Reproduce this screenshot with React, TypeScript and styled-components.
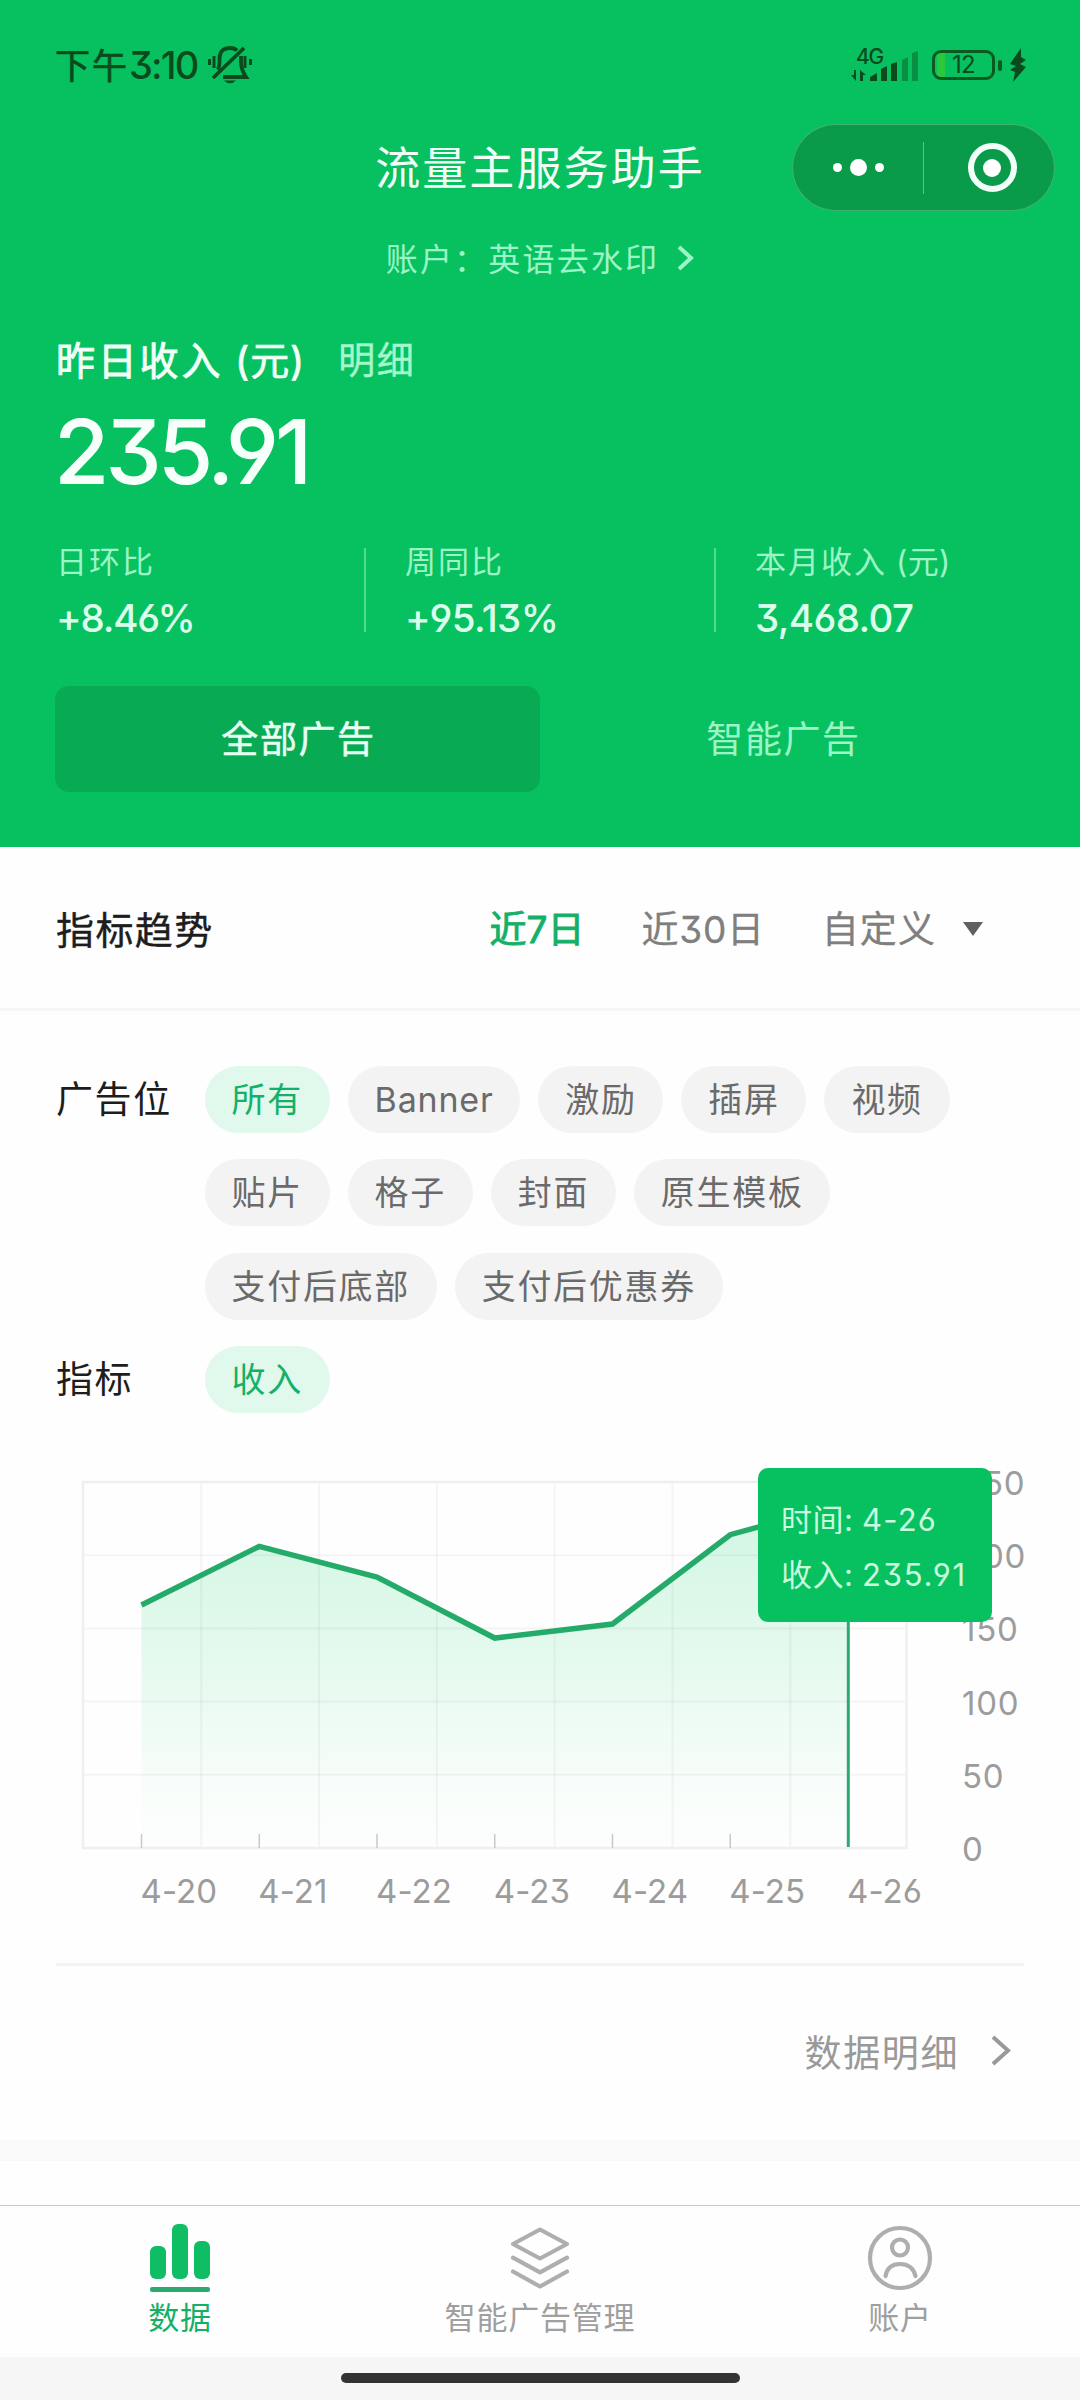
import React from 'react';
import styled, { createGlobalStyle } from 'styled-components';

const GREEN = '#07c160';
const ACCENT = '#14b068';
const LINE = '#24ab6a';

const GlobalStyle = createGlobalStyle`
  * { box-sizing: border-box; }
  html, body { margin: 0; padding: 0; background: #fefefe; }
  body {
    font-family: Inter, 'Noto Sans CJK SC', 'Noto Sans', sans-serif;
    font-feature-settings: 'cv03', 'cv04', 'cv09', 'calt' 0;
    white-space: nowrap;
  }
`;

const Screen = styled.div`
  width: 1080px;
  height: 2400px;
  display: flex;
  flex-direction: column;
  background: #fefefe;
  overflow: hidden;
`;

const Txt = styled.span<{ $size: number; $ls?: number; $color?: string; $weight?: number; $stroke?: number; $lift?: number }>`
  font-size: ${p => p.$size}px;
  letter-spacing: ${p => p.$ls ?? 0}px;
  color: ${p => p.$color ?? 'inherit'};
  font-weight: ${p => p.$weight ?? 400};
  -webkit-text-stroke: ${p => p.$stroke ?? 0}px currentColor;
  padding-bottom: ${p => p.$lift ?? 0}px;
`;

/* ---------- header ---------- */

const Header = styled.header`
  height: 847px;
  flex: none;
  display: flex;
  flex-direction: column;
  background: ${GREEN};
  color: #f2fff8;
`;

const StatusBar = styled.div`
  height: 124px;
  padding: 6px 53px 0 55px;
  display: flex;
  align-items: center;
  justify-content: space-between;
  color: #0b4a1c;
`;

const StatusGroup = styled.div`
  display: flex;
  align-items: center;
`;

const BellIcon = styled.svg`
  margin-left: 9px;
`;

const Battery = styled.div`
  width: 63px;
  height: 30px;
  margin-left: 13px;
  border: 3px solid #0a5a22;
  border-radius: 9px;
  display: flex;
  align-items: center;
  justify-content: center;
  line-height: 24px;
  background: linear-gradient(90deg, transparent 2px, #2cc83c 2px, #2cc83c 10px, transparent 10px);
`;

const BatteryTip = styled.div`
  width: 4px;
  height: 11px;
  margin: 0 7px 0 3px;
  border-radius: 2px;
  background: #0a5a22;
`;

const TitleBar = styled.div`
  height: 86px;
  padding: 0 25px;
  display: grid;
  grid-template-columns: 1fr auto 1fr;
  align-items: center;
`;

const Capsule = styled.div`
  grid-column: 3;
  justify-self: end;
  width: 263px;
  height: 87px;
  border-radius: 44px;
  border: 1px solid rgba(255, 255, 255, 0.22);
  background: #0a9b4a;
  display: flex;
  align-items: center;
`;

const CapsuleHalf = styled.div<{ $pad: number }>`
  width: 130px;
  display: flex;
  align-items: center;
  justify-content: center;
  gap: 8px;
  padding-left: ${p => p.$pad}px;
`;

const CapsuleRule = styled.div`
  width: 1px;
  height: 52px;
  background: rgba(255, 255, 255, 0.35);
`;

const Dot = styled.i<{ $d: number }>`
  width: ${p => p.$d}px;
  height: ${p => p.$d}px;
  border-radius: 50%;
  background: #fff;
`;

const Ring = styled.div`
  width: 49px;
  height: 49px;
  border: 6.5px solid #f2fff8;
  border-radius: 50%;
  display: grid;
  place-items: center;
`;

const Account = styled.div`
  height: 48px;
  margin-top: 24px;
  display: flex;
  align-items: center;
  justify-content: center;
  gap: 18px;
  color: #9cf5c6;
`;

const IncomeHead = styled.div`
  height: 56px;
  margin-top: 51px;
  padding-left: 56px;
  display: flex;
  align-items: center;
  line-height: 56px;
`;

const DetailLink = styled(Txt)`
  margin-left: 33px;
`;

const Amount = styled.div`
  height: 90px;
  margin-top: 18px;
  padding-left: 54px;
  font-size: 90px;
  line-height: 90px;
  font-weight: 500;
  letter-spacing: -4.1px;
  color: #f6fffa;
`;

const Stats = styled.div`
  height: 84px;
  margin-top: 51px;
  display: flex;
`;

const Stat = styled.div<{ $w: number; $pad: number }>`
  width: ${p => p.$w}px;
  padding-left: ${p => p.$pad}px;
  border-right: 2px solid #4fdc92;
  display: flex;
  flex-direction: column;
  gap: 28px;
  line-height: 28px;
  &:last-child { border-right: none; }
`;

const StatLabel = styled.div`
  display: flex;
  height: 28px;
  font-size: 31px;
  letter-spacing: 2px;
  color: #9cf5c6;
`;

const Unit = styled.span`
  letter-spacing: 0.3px;
`;

const Tabs = styled.div`
  height: 106px;
  margin: 54px 55px 0;
  display: flex;
`;

const Tab = styled.div<{ $active?: boolean }>`
  flex: 1;
  display: flex;
  align-items: center;
  justify-content: center;
  padding: 0 0 4px 2px;
  border-radius: 14px;
  background: ${p => (p.$active ? '#08ab54' : 'transparent')};
  color: ${p => (p.$active ? '#eafff3' : '#9cf5c6')};
`;

/* ---------- trend ---------- */

const TrendBar = styled.div`
  height: 164px;
  flex: none;
  padding: 0 97px 1px 56px;
  display: flex;
  align-items: center;
  border-bottom: 3px solid #f6f6f6;
  color: #7f7f7f;
`;

const Range = styled.div<{ $ml: number }>`
  margin-left: ${p => p.$ml}px;
  display: flex;
`;

const Caret = styled.i`
  margin: 3px 0 0 auto;
  border: 10.5px solid transparent;
  border-top: 14px solid #606060;
  border-bottom: none;
`;

const Filters = styled.section`
  flex: none;
  height: 402px;
  padding: 55px 56px 0;
  display: flex;
  flex-direction: column;
  gap: 27.3px;
`;

const FilterRow = styled.div`
  display: flex;
  align-items: flex-start;
`;

const FilterLabel = styled.div`
  width: 148.5px;
  flex: none;
  display: flex;
  line-height: 67px;
  color: #1d1d1d;
`;

const Chips = styled.div`
  flex: 1;
  display: flex;
  flex-wrap: wrap;
  gap: 27.3px 18px;
`;

const Chip = styled.div<{ $active?: boolean }>`
  height: 67px;
  margin-bottom: -1px;
  padding: 0 26.7px 0 27px;
  border-radius: 34px;
  line-height: 67px;
  font-size: 34px;
  letter-spacing: 1.7px;
  color: ${p => (p.$active ? ACCENT : '#6a6a6a')};
  background: ${p => (p.$active ? '#e1f9ec' : '#f4f3f3')};
`;

const ChipLatin = styled.span`
  letter-spacing: 0.8px;
`;

/* ---------- chart ---------- */

const ChartBox = styled.div`
  position: relative;
  height: 550px;
  flex: none;
`;

const Tooltip = styled.div`
  position: absolute;
  left: 758px;
  top: 55px;
  width: 234px;
  height: 154px;
  padding: 24px 0 0 23px;
  border-radius: 10px;
  background: ${GREEN};
  color: #c9fbdf;
`;

const TipLine = styled.div`
  display: flex;
  height: 55px;
  line-height: 55px;
`;

const TipLabel = styled.span`
  width: 81px;
  font-size: 31px;
  letter-spacing: 0.5px;
`;

const AxisText = styled.text<{ $ls: number }>`
  font-size: 33px;
  fill: #9c9c9c;
  letter-spacing: ${p => p.$ls}px;
`;

const MoreRow = styled.div`
  height: 177px;
  flex: none;
  margin: 0 56px;
  padding: 0 13px 5px 0;
  border-top: 3px solid #f3f3f3;
  display: flex;
  align-items: center;
  justify-content: flex-end;
  gap: 32px;
  color: #999;
`;

const Band = styled.div`
  height: 21px;
  flex: none;
  background: #f9f9f9;
`;

/* ---------- bottom navigation ---------- */

const Nav = styled.nav`
  height: 152px;
  flex: none;
  margin-top: auto;
  padding-top: 16px;
  border-top: 1px solid #c9cccb;
  display: flex;
`;

const NavItem = styled.div<{ $active?: boolean }>`
  flex: 1;
  display: flex;
  flex-direction: column;
  align-items: center;
  line-height: 48px;
  color: ${p => (p.$active ? ACCENT : '#9f9f9f')};
`;

const HomeArea = styled.div`
  height: 43px;
  flex: none;
  padding-top: 16px;
  display: flex;
  justify-content: center;
  background: #f6f6f6;
`;

const HomeBar = styled.div`
  width: 399px;
  height: 10px;
  border-radius: 5px;
  background: #333;
`;

const points = [
  { day: '4-20', value: 166 },
  { day: '4-21', value: 206 },
  { day: '4-22', value: 185 },
  { day: '4-23', value: 143.4 },
  { day: '4-24', value: 153 },
  { day: '4-25', value: 214 },
  { day: '4-26', value: 235.91 },
];

const BOTTOM = 435;
const px = (i: number) => 141.5 + i * 117.75;
const py = (v: number) => BOTTOM - v * 1.464;

function Chart() {
  const line = points.map((p, i) => `${px(i)},${py(p.value)}`).join(' ');
  return (
    <svg width="1080" height="550" viewBox="0 0 1080 550">
      <defs>
        <linearGradient id="area" gradientUnits="userSpaceOnUse" x1="0" y1="90" x2="0" y2={BOTTOM}>
          <stop offset="0" stopColor="#14d46c" stopOpacity="0.19" />
          <stop offset="0.45" stopColor="#14d46c" stopOpacity="0.11" />
          <stop offset="0.8" stopColor="#14d46c" stopOpacity="0.03" />
          <stop offset="1" stopColor="#14d46c" stopOpacity="0.005" />
        </linearGradient>
      </defs>
      <polygon points={`${px(0)},${BOTTOM} ${line} ${px(6)},${BOTTOM}`} fill="url(#area)" />
      <g stroke="#000" strokeOpacity="0.04" strokeWidth="2">
        {[50, 100, 150, 200].map(v => (
          <line key={v} x1="83" x2="906" y1={py(v)} y2={py(v)} />
        ))}
        {[1, 2, 3, 4, 5, 6].map(i => (
          <line key={i} y1="69" y2={BOTTOM} x1={83.5 + i * 117.8} x2={83.5 + i * 117.8} />
        ))}
      </g>
      <rect x="83" y="69" width="823.5" height="366" fill="none" stroke="#efefef" strokeWidth="2.5" />
      {points.slice(0, 6).map((p, i) => (
        <line key={p.day} x1={px(i)} x2={px(i)} y1="421" y2="435" stroke="#c8c8c8" strokeWidth="1.5" />
      ))}
      <polyline points={line} fill="none" stroke={LINE} strokeWidth="5.5" />
      <line x1="848.3" x2="848.3" y1="80" y2="434" stroke="#2fa873" strokeWidth="3" />
      {points.map((p, i) => (
        <AxisText key={p.day} $ls={0.1} x={px(i) - 1} y="490">{p.day}</AxisText>
      ))}
      {[0, 50, 100, 150, 200, 250].map(v => (
        <AxisText key={v} $ls={0.8} x="962" y={py(v) + 13}>{v}</AxisText>
      ))}
    </svg>
  );
}

function Chevron({ w, h, s }: { w: number; h: number; s: number }) {
  return (
    <svg width={w} height={h} fill="none" stroke="currentColor" strokeWidth={s}>
      <path d={`M2 2L${w - 3} ${h / 2}L2 ${h - 2}`} />
    </svg>
  );
}

export default function App() {
  return (
    <Screen>
      <GlobalStyle />
      <Header>
        <StatusBar>
          <StatusGroup>
            <Txt $size={35} $ls={2} $stroke={0.7} $lift={3}>下午</Txt>
            <Txt $size={38} $ls={-1.8} $weight={500}>3:10</Txt>
            <BellIcon width="46" height="40" viewBox="0 0 46 40" fill="none" stroke="currentColor" strokeWidth="3.8">
              <path d="M37 3L6 33" />
              <path d="M10.500 24.500C13 22 12.500 18 12.500 13.500C12.500 6 17 3 23 3C26 3 28.500 4 30 5.500" />
              <path d="M34 11V17C34 23 35 26 39 32H16" />
              <path d="M17 35.500Q23 41 29 35.500Z" fill="currentColor" stroke="none" />
              <path d="M2.500 14V20M7 11V23M38 11V23M43.500 14V20" strokeWidth="3" />
            </BellIcon>
          </StatusGroup>
          <StatusGroup>
            <svg width="68" height="48" viewBox="0 -6 68 48" fill="currentColor">
              <text x="5" y="17" fontSize="21" letterSpacing="-1.2" fontWeight="500">4G</text>
              <path d="M5 23V34L0 28H3V23ZM9 34V23L15 28H12V34Z" />
              <path d="M19 30L26 26V34H19ZM30 22L36 19V34H30ZM40 17L46 15V34H40Z" />
              <path d="M51 13L57 10V34H51ZM61 6L67 4V34H61Z" opacity=".42" />
            </svg>
            <Battery><Txt $size={24} $ls={-0.8}>12</Txt></Battery>
            <BatteryTip />
            <svg width="18" height="34" viewBox="0 0 18 34" fill="currentColor">
              <path d="M12 0L1 16L7 18L1 22L6 24L4 34L17 19L11 16L17 12L12 9Z" />
            </svg>
          </StatusGroup>
        </StatusBar>

        <TitleBar>
          <span />
          <Txt $size={45} $ls={2.1} $lift={4}>流量主服务助手</Txt>
          <Capsule>
            <CapsuleHalf $pad={0}>
              <Dot $d={9} />
              <Dot $d={17} />
              <Dot $d={9} />
            </CapsuleHalf>
            <CapsuleRule />
            <CapsuleHalf $pad={6}>
              <Ring><Dot $d={18} /></Ring>
            </CapsuleHalf>
          </Capsule>
        </TitleBar>

        <Account>
          <Txt $size={32} $ls={2.2} $lift={2}>账户：英语去水印</Txt>
          <Chevron w={17} h={26} s={4} />
        </Account>

        <IncomeHead>
          <Txt $size={39} $ls={2.8} $stroke={0.9}>昨日收入</Txt>
          <Txt $size={39} $ls={0.9} $stroke={0.7}>&nbsp;(元)</Txt>
          <DetailLink $size={37} $ls={1.5} $color="#a4f8cb" $stroke={0.4}>明细</DetailLink>
        </IncomeHead>
        <Amount>235.91</Amount>

        <Stats>
          <Stat $w={366} $pad={56}>
            <StatLabel>日环比</StatLabel>
            <Txt $size={38.5} $ls={-1.2} $weight={500} $color="#dcffec">+8.46%</Txt>
          </Stat>
          <Stat $w={350} $pad={39}>
            <StatLabel>周同比</StatLabel>
            <Txt $size={38.5} $ls={-0.6} $weight={500} $color="#dcffec">+95.13%</Txt>
          </Stat>
          <Stat $w={364} $pad={39}>
            <StatLabel>本月收入<Unit>&nbsp;(元)</Unit></StatLabel>
            <Txt $size={38.5} $ls={-0.6} $weight={500} $color="#dcffec">3,468.07</Txt>
          </Stat>
        </Stats>

        <Tabs>
          <Tab $active><Txt $size={37} $ls={1.6} $stroke={0.5}>全部广告</Txt></Tab>
          <Tab><Txt $size={37} $ls={1.6}>智能广告</Txt></Tab>
        </Tabs>
      </Header>

      <TrendBar>
        <Txt $size={38} $ls={1.4} $color="#1d1d1d" $stroke={0.4}>指标趋势</Txt>
        <Range $ml={276}><Txt $size={37} $color={ACCENT} $stroke={0.9}>近7日</Txt></Range>
        <Range $ml={57}><Txt $size={37} $ls={0.7} $stroke={0.3}>近30日</Txt></Range>
        <Range $ml={57}><Txt $size={37} $ls={1.2} $stroke={0.3}>自定义</Txt></Range>
        <Caret />
      </TrendBar>

      <Filters>
        <FilterRow>
          <FilterLabel><Txt $size={37} $ls={1.6}>广告位</Txt></FilterLabel>
          <Chips>
            <Chip $active>所有</Chip>
            <Chip><ChipLatin>Banner</ChipLatin></Chip>
            <Chip>激励</Chip>
            <Chip>插屏</Chip>
            <Chip>视频</Chip>
            <Chip>贴片</Chip>
            <Chip>格子</Chip>
            <Chip>封面</Chip>
            <Chip>原生模板</Chip>
            <Chip>支付后底部</Chip>
            <Chip>支付后优惠券</Chip>
          </Chips>
        </FilterRow>
        <FilterRow>
          <FilterLabel><Txt $size={37} $ls={1.6}>指标</Txt></FilterLabel>
          <Chips>
            <Chip $active>收入</Chip>
          </Chips>
        </FilterRow>
      </Filters>

      <ChartBox>
        <Chart />
        <Tooltip>
          <TipLine><TipLabel>时间:</TipLabel><Txt $size={31} $ls={1.2}>4-26</Txt></TipLine>
          <TipLine><TipLabel>收入:</TipLabel><Txt $size={31} $ls={1.8}>235.91</Txt></TipLine>
        </Tooltip>
      </ChartBox>

      <MoreRow>
        <Txt $size={37} $ls={1.6}>数据明细</Txt>
        <Chevron w={20} h={31} s={4} />
      </MoreRow>
      <Band />

      <Nav>
        <NavItem $active>
          <svg width="72" height="72" viewBox="0 0 72 72" fill="#0fbd65">
            <rect x="6" y="24" width="16" height="33" rx="6" />
            <rect x="28" y="2" width="16" height="55" rx="6" />
            <rect x="50" y="19" width="16" height="38" rx="6" />
            <rect x="6" y="65" width="60" height="5" rx="2" fill="#2da871" />
          </svg>
          <Txt $size={31} $ls={0.8}>数据</Txt>
        </NavItem>
        <NavItem>
          <svg width="72" height="72" viewBox="0 0 72 72" fill="none" stroke="#aeaeae" strokeWidth="4.2" strokeLinecap="round" strokeLinejoin="round">
            <path d="M36 7.500L63 22L36 36.500L9 22Z" />
            <path d="M9 35.700L36 50.300L63 35.700M9 49.500L36 64.500L63 49.500" />
          </svg>
          <Txt $size={31} $ls={0.8}>智能广告管理</Txt>
        </NavItem>
        <NavItem>
          <svg width="72" height="72" viewBox="0 0 72 72" fill="none" stroke="#aeaeae" strokeWidth="4.2" strokeLinecap="round">
            <circle cx="36" cy="36" r="30" />
            <circle cx="36" cy="25.500" r="8" />
            <path d="M21.500 54C23 46 28 42 36 42S49.500 46 51.500 54" />
          </svg>
          <Txt $size={31} $ls={0.8}>账户</Txt>
        </NavItem>
      </Nav>
      <HomeArea><HomeBar /></HomeArea>
    </Screen>
  );
}
